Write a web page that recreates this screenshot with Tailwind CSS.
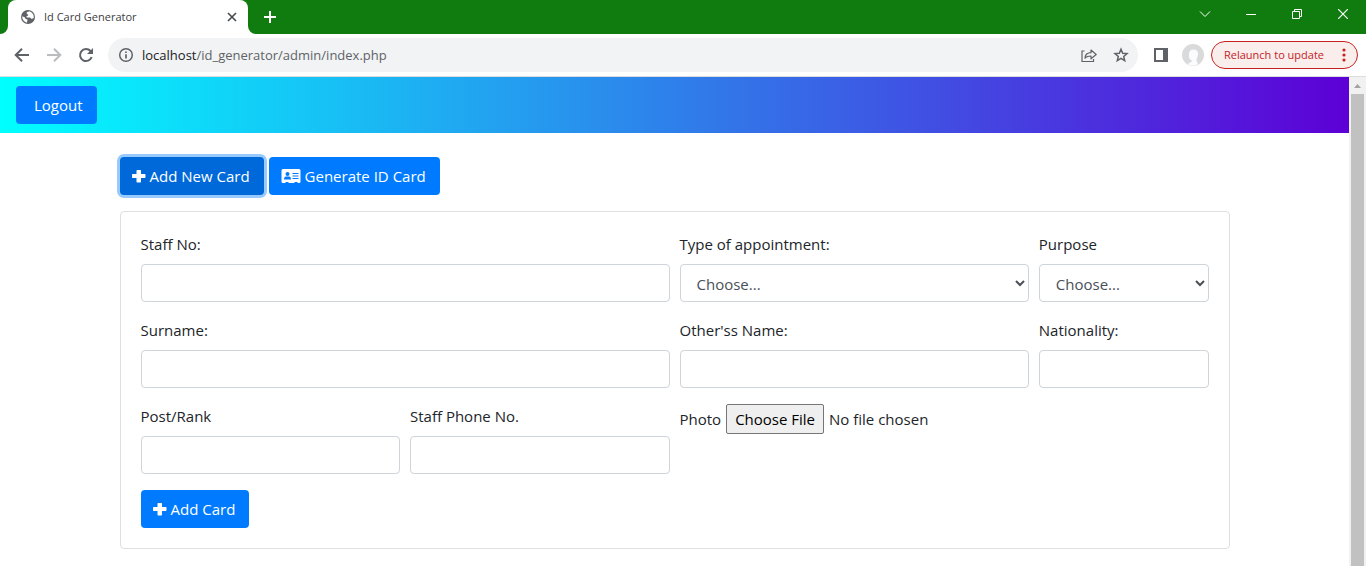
<!DOCTYPE html>
<html lang="en">
<head>
<meta charset="utf-8">
<meta name="viewport" content="width=device-width, initial-scale=1">
<title>Id Card Generator</title>
<script src="https://cdn.jsdelivr.net/npm/@tailwindcss/browser@4"></script>
</head>
<body class="flex h-screen flex-col overflow-hidden bg-white font-['Open_Sans','Noto_Sans',sans-serif] text-[15px] leading-6 text-[#212529]">

<!-- Tab strip -->
<div class="flex h-[34px] shrink-0 items-stretch bg-[#107c10] text-white">
  <svg class="w-2 self-end" height="8" viewBox="0 0 8 8" aria-hidden="true"><path d="M8 0v8H0a8 8 0 0 0 8-8z" fill="#fff"/></svg>
  <div class="flex w-60 items-center rounded-t-lg bg-white pl-3 pr-2.5 text-[#3c4043]">
    <svg class="mr-2 size-4" viewBox="0 0 16 16" aria-hidden="true"><circle cx="8" cy="8" r="7" fill="#5f6368"/><path d="M9.300 2.300C8 3 6.500 3 6.600 4.200c0 1.200 1.600.6 1.700 1.700.1.900-1.500.8-1.900 1.600-.3.700.5 1.100 1.300 1.100h2.100c1 0 1.100 1.300 2 1.300.7 0 .8-.8 2-1a6 6 0 0 0-4.500-6.600zM2.200 7.200c.7.500 1.600.6 2.400 1 .9.500.5 1.500 1.300 1.900.7.400 1.400.1 1.600.8.200.9-.7 1.400-.6 2.800A6 6 0 0 1 2.200 7.200z" fill="#fff"/></svg>
    <span class="grow text-[11px]">Id Card Generator</span>
    <button aria-label="Close tab" class="size-3"><svg viewBox="0 0 12 12" stroke="#45494d" stroke-width="1.600"><path d="M2 2l8 8M10 2l-8 8"/></svg></button>
  </div>
  <svg class="w-2 self-end" height="8" viewBox="0 0 8 8" aria-hidden="true"><path d="M0 0v8h8a8 8 0 0 1-8-8z" fill="#fff"/></svg>
  <button aria-label="New tab" class="ml-1 flex w-5 items-center justify-center"><svg width="14" height="14" viewBox="0 0 14 14" stroke="#fff" stroke-width="2"><path d="M7 1v12M1 7h12"/></svg></button>
  <div class="ml-auto flex">
    <button aria-label="Search tabs" class="flex w-[46px] items-center justify-center pb-1.5"><svg width="12" height="12" viewBox="0 0 12 12" fill="none" stroke="#fff"><path d="M1 3.500l5 5 5-5"/></svg></button>
    <button aria-label="Minimize" class="flex w-[46px] items-center justify-center pb-1.5"><svg width="10" height="10" viewBox="0 0 10 10" stroke="#fff"><path d="M0 5.500h10"/></svg></button>
    <button aria-label="Restore" class="flex w-[46px] items-center justify-center pb-1.5"><svg width="10" height="10" viewBox="0 0 10 10" fill="none" stroke="#fff"><path d="M.5 2.500h7v7h-7zM2.500 2.500v-2h7v7h-2"/></svg></button>
    <button aria-label="Close window" class="flex w-[46px] items-center justify-center pb-1.5"><svg width="10" height="10" viewBox="0 0 10 10" stroke="#fff" stroke-width="1.200"><path d="M0 0l10 10M10 0L0 10"/></svg></button>
  </div>
</div>

<!-- Toolbar -->
<div class="flex h-[43px] shrink-0 items-center border-b border-[#dadce0] bg-white pl-3.5 pr-2">
  <button aria-label="Back" class="mr-4 size-4"><svg viewBox="0 0 16 16" fill="none" stroke="#5f6368" stroke-width="2"><path d="M15 8H2M8 1.700L1.700 8 8 14.300"/></svg></button>
  <button aria-label="Forward" class="mr-4 size-4"><svg viewBox="0 0 16 16" fill="none" stroke="#babcbe" stroke-width="2"><path d="M1 8h13M8 1.700L14.300 8 8 14.300"/></svg></button>
  <button aria-label="Reload" class="mr-3.5 size-4"><svg viewBox="0 0 16 16" fill="none" stroke="#5f6368" stroke-width="2"><path d="M13.700 10A6 6 0 1 1 12.500 4l1 1"/><path d="M15 1v6H9z" fill="#5f6368" stroke="none"/></svg></button>
  <div class="flex h-[34px] grow items-center rounded-full bg-[#f1f3f4] pl-2.5 pr-[9px]">
    <svg class="mr-2 size-4" viewBox="0 0 16 16" fill="none" stroke="#5f6368" stroke-width="1.500" aria-hidden="true"><circle cx="8" cy="8" r="6.300"/><path d="M8 7.200v4.200M8 4.400v1.700" stroke-width="1.700"/></svg>
    <span class="grow text-[13px] text-[#5f6368]"><span class="text-[#202124]">localhost</span>/id_generator/admin/index.php</span>
    <button aria-label="Share" class="mr-4 size-4"><svg viewBox="0 0 16 16" fill="none" stroke="#5f6368" stroke-width="1.200"><path d="M3.500 4H1v10.500h11.500V12"/><path d="M4 11c.3-3.500 2.200-5.200 6-5.300V3l5.200 4.500-5.200 4.300V9C7.500 9 5.500 9.500 4 11z" stroke-linejoin="round"/></svg></button>
    <button aria-label="Bookmark this page" class="size-4"><svg viewBox="0 0 16 16" fill="none" stroke="#5f6368" stroke-width="1.500"><path d="M8 2.200l1.700 4 4.300.4-3.300 2.800 1 4.200L8 11.400l-3.700 2.200 1-4.200L2 6.600l4.300-.4z"/></svg></button>
  </div>
  <button aria-label="Side panel" class="ml-4 size-3.5"><svg viewBox="0 0 14 14"><path fill="#5f6368" fill-rule="evenodd" d="M0 0h14v14H0zM2 2v10h7V2z"/></svg></button>
  <button aria-label="Profile" class="ml-3.5 size-[22px]"><svg viewBox="0 0 22 22"><circle cx="11" cy="11" r="11" fill="#dadada"/><path d="M11.500 5.500c3.300 0 4.800 2.200 4.500 5-.2 2.500-1.300 3.700-1.500 5.500.1 2.300 1.500 3 1.600 4.300-2.700 1.700-7 1.900-10.100.2.300-1.800 4-1.700 4.200-4.200-2.700-.1-3.400-2.800-3.300-5.800.1-3 1.600-5 4.600-5z" fill="#fafcfd"/></svg></button>
  <button class="ml-[7px] flex h-7 w-[147px] items-center justify-between rounded-full border border-[#c5221f] bg-[#f9eeec] pl-3 pr-[11px] text-[11px] text-[#c5221f]"><span class="whitespace-nowrap">Relaunch to update</span><svg width="4" height="14" viewBox="0 0 4 14" fill="#c5221f" aria-hidden="true"><circle cx="2" cy="2" r="1.600"/><circle cx="2" cy="7" r="1.600"/><circle cx="2" cy="12" r="1.600"/></svg></button>
</div>

<!-- Page -->
<div class="flex min-h-0 grow">
  <div class="min-w-0 grow overflow-hidden">
    <nav class="flex h-14 items-center bg-linear-to-r/srgb from-[#00ffff] to-[#5d00d6] px-4">
      <a href="#" class="rounded bg-[#007bff] py-[7px] pl-[18px] pr-3.5 text-white">Logout</a>
    </nav>
    <main class="mx-auto max-w-[1110px] pt-6">
      <div class="mb-4 flex gap-[5px]">
        <button class="flex h-[38px] items-center gap-1 rounded bg-[#0069d9] pl-3 pr-3.5 text-white ring-3 ring-[#007bff]/40">
          <svg class="size-3.5" viewBox="0 0 14 14" fill="#fff" aria-hidden="true"><path d="M5.200 1h3.100q.7 0 .7.700V5h3.800q.7 0 .7.700v2.600q0 .7-.7.700H9v3.800q0 .7-.7.700H5.200q-.7 0-.7-.7V9H.7Q0 9 0 8.300V5.700Q0 5 .7 5h3.800V1.700q0-.7.700-.7z"/></svg>Add New Card</button>
        <button class="flex h-[38px] items-center gap-1 rounded bg-[#007bff] pl-3 pr-3.5 text-white">
          <svg width="20" height="16" viewBox="0 0 20 16" aria-hidden="true"><path d="M2 1h16q1.500 0 1.500 1.500v11q0 1.500-1.500 1.500h-1.500v-1h-3v1h-6v-1h-3v1H2Q.5 15 .5 13.500v-11Q.5 1 2 1z" fill="#fff"/><circle cx="6.500" cy="6" r="2" fill="#007bff"/><path d="M3 11.500c0-2 .8-3 2-3h3c1.200 0 2 1 2 3zM11.500 5h6v1h-6zM11.500 7.500h6v1h-6zM11.500 10h6v1h-6z" fill="#007bff"/></svg>Generate ID Card</button>
      </div>
      <form class="rounded border border-[#dfdfdf] p-5" onsubmit="return false">
        <div class="grid grid-cols-12 gap-x-2.5 gap-y-4">
          <div class="col-span-6"><label for="staff" class="mb-2 block">Staff No:</label><input id="staff" type="text" class="block h-[38px] w-full rounded border border-[#ced4da] px-3"></div>
          <div class="col-span-4"><label for="type" class="mb-2 block">Type of appointment:</label><select id="type" class="block h-[38px] w-full rounded border border-[#ced4da] bg-white px-3 pt-0.5 text-[#495057]"><option>Choose...</option></select></div>
          <div class="col-span-2"><label for="purpose" class="mb-2 block">Purpose</label><select id="purpose" class="block h-[38px] w-full rounded border border-[#ced4da] bg-white px-3 pt-0.5 text-[#495057]"><option>Choose...</option></select></div>
          <div class="col-span-6"><label for="surname" class="mb-2 block">Surname:</label><input id="surname" type="text" class="block h-[38px] w-full rounded border border-[#ced4da] px-3"></div>
          <div class="col-span-4"><label for="others" class="mb-2 block">Other'ss Name:</label><input id="others" type="text" class="block h-[38px] w-full rounded border border-[#ced4da] px-3"></div>
          <div class="col-span-2"><label for="nationality" class="mb-2 block">Nationality:</label><input id="nationality" type="text" class="block h-[38px] w-full rounded border border-[#ced4da] px-3"></div>
          <div class="col-span-3"><label for="post" class="mb-2 block">Post/Rank</label><input id="post" type="text" class="block h-[38px] w-full rounded border border-[#ced4da] px-3"></div>
          <div class="col-span-3"><label for="phone" class="mb-2 block">Staff Phone No.</label><input id="phone" type="text" class="block h-[38px] w-full rounded border border-[#ced4da] px-3"></div>
          <div class="col-span-4 flex items-center gap-[5px] self-start"><label for="photo">Photo</label><input id="photo" type="file" class="min-w-0 grow file:mr-[5px] file:h-[30px] file:rounded-xs file:border file:border-solid file:border-[#767676] file:bg-[#efefef] file:px-2 file:text-black"></div>
        </div>
        <button class="mt-4 flex h-[38px] items-center gap-1 rounded bg-[#007bff] pl-3 pr-3.5 text-white">
          <svg class="size-3.5" viewBox="0 0 14 14" fill="#fff" aria-hidden="true"><path d="M5.200 1h3.100q.7 0 .7.700V5h3.800q.7 0 .7.700v2.600q0 .7-.7.700H9v3.800q0 .7-.7.700H5.200q-.7 0-.7-.7V9H.7Q0 9 0 8.300V5.700Q0 5 .7 5h3.800V1.700q0-.7.700-.7z"/></svg>Add Card</button>
      </form>
    </main>
  </div>
  <!-- Scrollbar -->
  <div class="flex w-[17px] shrink-0 flex-col items-center bg-[#f1f1f1]" aria-hidden="true">
    <svg class="h-[17px] w-[17px] shrink-0" viewBox="0 0 17 17"><path d="M5 11l3.500-4 3.500 4z" fill="#a3a3a3"/></svg>
    <div class="w-[13px] grow bg-[#c1c1c1]"></div>
  </div>
</div>
</body>
</html>
